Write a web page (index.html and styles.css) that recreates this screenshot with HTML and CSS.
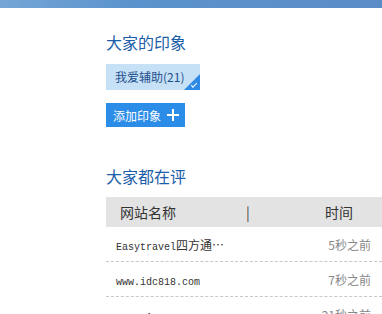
FILE: index.html
```html
<!DOCTYPE html>
<html lang="zh-CN">
<head>
    <meta charset="UTF-8">
    <title>大家的印象</title>
    <link rel="stylesheet" href="styles.css">
</head>
<body>
    <div class="topbar"></div>

    <div class="container">
        <section class="impress">
            <h2>大家的印象</h2>
            <div class="tags">
                <span class="tag selected">我爱辅助(21)</span>
            </div>
            <button class="add-btn">添加印象
                <svg class="plus" width="12" height="12" viewBox="0 0 12 12">
                    <path d="M6 0V12M0 6H12" stroke="#ffffff" stroke-width="2" fill="none"/>
                </svg>
            </button>
        </section>

        <section class="reviews">
            <h2>大家都在评</h2>
            <div class="table">
                <div class="table-head">
                    <span class="col-name">网站名称</span>
                    <span class="sep">|</span>
                    <span class="col-time">时间</span>
                </div>
                <div class="row">
                    <span class="site"><span class="en">Easytravel</span>四方通…</span>
                    <span class="time">5秒之前</span>
                </div>
                <div class="row">
                    <span class="site"><span class="en">www.idc818.com</span></span>
                    <span class="time">7秒之前</span>
                </div>
                <div class="row">
                    <span class="site"><span class="en">www.a1ace.com</span></span>
                    <span class="time">21秒之前</span>
                </div>
            </div>
        </section>
    </div>
</body>
</html>
```

FILE: styles.css
```css
* {
    box-sizing: border-box;
    margin: 0;
    padding: 0;
}

body {
    font-family: "Noto Sans CJK SC", "Liberation Sans", sans-serif;
    color: #333333;
    background: #ffffff;
    overflow: hidden;
}

.topbar {
    height: 8px;
    background: linear-gradient(100deg, #75a6d6 0%, #5a93cd 35%, #5b8cc8 100%);
}

.container {
    padding-left: 106px;
}

h2 {
    font-size: 16px;
    font-weight: normal;
    color: #1b5ea9;
    line-height: 20px;
}

.impress h2 {
    margin-top: 24px;
}

.tags {
    display: flex;
    margin-top: 12px;
}

.tag {
    position: relative;
    display: block;
    width: 94px;
    height: 26px;
    line-height: 26px;
    padding-left: 9px;
    font-size: 12px;
    color: #1d4f8c;
    background: #c6e0f6;
}

.tag.selected::after {
    content: "";
    position: absolute;
    right: 0;
    bottom: 0;
    border-style: solid;
    border-width: 0 0 16px 16px;
    border-color: transparent transparent #2e8ae6 transparent;
}

.tag.selected::before {
    content: "";
    position: absolute;
    right: 3px;
    bottom: 4px;
    width: 5px;
    height: 2px;
    border-left: 1px solid #ffffff;
    border-bottom: 1px solid #ffffff;
    transform: rotate(-45deg);
    z-index: 1;
}

.add-btn {
    display: flex;
    align-items: center;
    margin-top: 13px;
    width: 79px;
    height: 24px;
    padding-left: 7px;
    border: none;
    background: #2b8de8;
    color: #ffffff;
    font-family: inherit;
    font-size: 12px;
}

.plus {
    margin-left: 6px;
}

.reviews h2 {
    margin-top: 39px;
}

.table {
    margin-top: 11px;
    width: 276px;
}

.table-head {
    display: flex;
    align-items: center;
    height: 30px;
    background: #e3e3e3;
    font-size: 14px;
    color: #333333;
}

.col-name {
    margin-left: 14px;
}

.sep {
    margin-left: 70px;
    color: #444444;
}

.col-time {
    margin-left: auto;
    margin-right: 29px;
}

.row {
    display: flex;
    align-items: center;
    justify-content: space-between;
    height: 35px;
    padding: 0 11px 0 10px;
    border-bottom: 1px dashed #c8c8c8;
    font-size: 12px;
}

.site {
    color: #333333;
}

.en {
    font-family: "Liberation Mono", monospace;
    font-size: 10px;
}

.time {
    color: #888888;
}
```
